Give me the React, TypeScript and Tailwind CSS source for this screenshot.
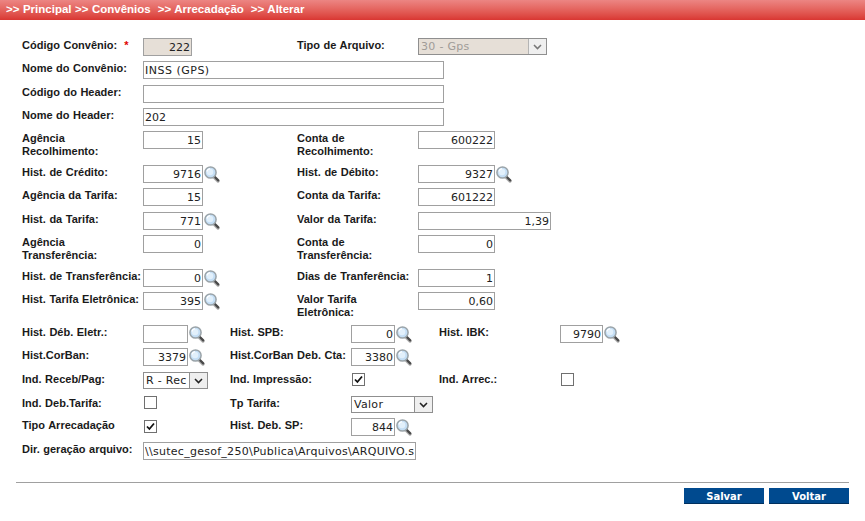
import React from "react";

const Label = ({ children, w }: { children: React.ReactNode; w: string }) => (
  <div className={`${w} shrink-0 pt-[1px] pr-[2px] text-[11px] leading-[13px] font-bold [word-spacing:0.5px] text-[#1a1a1a]`}>{children}</div>
);

const Input = ({ w, value = "", right = true, disabled = false, track = "" }: { w: string; value?: string; right?: boolean; disabled?: boolean; track?: string }) => (
  <input
    readOnly
    value={value}
    className={`${w} ${track} h-[18px] shrink-0 border border-[#a0a0a0] px-[1px] font-['DejaVu_Sans',sans-serif] text-[11px] text-[#222] outline-none ${right ? "text-right" : "text-left"} ${disabled ? "bg-[#e6dfd7]" : "bg-white"}`}
  />
);

const Lens = () => (
  <svg width="18" height="18" viewBox="0 0 18 18" className="shrink-0">
    <path d="M10.5 11.5 L15 16" stroke="#b0b0b0" strokeWidth="3.4" strokeLinecap="round" />
    <path d="M10.8 11 L15.2 15.4" stroke="#4a4a4a" strokeWidth="2.2" strokeLinecap="round" />
    <circle cx="7.5" cy="7.5" r="5.6" fill="#c4def5" stroke="#9aa3a8" strokeWidth="1.5" />
    <circle cx="7" cy="7" r="3.3" fill="#e2f0fb" />
    <path d="M3.8 6.5 A3.8 3.8 0 0 1 7 3.6" stroke="#ffffff" strokeWidth="1.1" fill="none" />
  </svg>
);

const Arrow = ({ disabled = false }: { disabled?: boolean }) => (
  <div className={`flex h-full w-[18px] shrink-0 items-center justify-center border-l bg-[#efefef] ${disabled ? "border-[#b4b4b4]" : "border-[#8f8f8f]"}`}>
    <svg width="9" height="6" viewBox="0 0 9 6">
      <path d="M1 1 L4.5 4.6 L8 1" stroke={disabled ? "#777" : "#222"} strokeWidth="1.5" fill="none" />
    </svg>
  </div>
);

const Select = ({ w, value, disabled = false }: { w: string; value: string; disabled?: boolean }) => (
  <div className={`${w} flex h-[17px] shrink-0 border border-[#8f8f8f] font-['DejaVu_Sans',sans-serif] text-[11px] leading-[16px] ${disabled ? "bg-[#e6dfd7] text-[#a09c98]" : "bg-white text-[#222]"}`}>
    <div className="min-w-0 flex-1 overflow-hidden pl-[2px] tracking-[0.3px] whitespace-nowrap">{value}</div>
    <Arrow disabled={disabled} />
  </div>
);

const Check = ({ checked = false }: { checked?: boolean }) => (
  <div className="ml-[1px] flex h-[13px] w-[13px] shrink-0 items-center justify-center border border-[#707070] bg-white">
    {checked && (
      <svg width="9" height="9" viewBox="0 0 9 9">
        <path d="M1 4.5 L3.4 7 L8 1.5" stroke="#111" strokeWidth="1.8" fill="none" />
      </svg>
    )}
  </div>
);

const Row = ({ h, children }: { h: string; children: React.ReactNode }) => <div className={`${h} flex items-start`}>{children}</div>;

const Cell = ({ w, children }: { w: string; children: React.ReactNode }) => <div className={`${w} flex shrink-0 items-start`}>{children}</div>;

const Pair = ({ a, av, b, bv, aw = "w-[60px]", bw = "w-[77px]", al = false, bl = false }: { a: React.ReactNode; av: string; b: React.ReactNode; bv: string; aw?: string; bw?: string; al?: boolean; bl?: boolean }) => (
  <>
    <Label w="w-[121px]">{a}</Label>
    <Cell w="w-[154px]">
      <Input w={aw} value={av} />
      {al && <Lens />}
    </Cell>
    <Label w="w-[121px]">{b}</Label>
    <Cell w="w-[200px]">
      <Input w={bw} value={bv} />
      {bl && <Lens />}
    </Cell>
  </>
);

export default function App() {
  return (
    <div className="h-[521px] w-[865px] overflow-hidden bg-white font-['Liberation_Sans',Arial,sans-serif]">
      <div className="flex h-[20px] items-center whitespace-pre bg-gradient-to-b from-[#ec8583] to-[#d93632] pl-[6px] text-[11.5px] font-bold [word-spacing:0.3px] text-white">
        {">> Principal >> Convênios  >> Arrecadação  >> Alterar"}
      </div>
      <div className="pt-[18px] pl-[22px]">
        <Row h="h-[23px]">
          <Label w="w-[121px]">
            Código Convênio: &nbsp;<span className="text-[#e00000]">*</span>
          </Label>
          <Cell w="w-[154px]">
            <Input w="w-[49px]" value="222" disabled />
          </Cell>
          <Label w="w-[121px]">Tipo de Arquivo:</Label>
          <Select w="w-[129px]" value="30 - Gps" disabled />
        </Row>
        <Row h="h-[24px]">
          <Label w="w-[121px]">Nome do Convênio:</Label>
          <Input w="w-[301px]" value="INSS (GPS)" right={false} track="tracking-[0.5px]" />
        </Row>
        <Row h="h-[23px]">
          <Label w="w-[121px]">Código do Header:</Label>
          <Input w="w-[301px]" right={false} />
        </Row>
        <Row h="h-[23px]">
          <Label w="w-[121px]">Nome do Header:</Label>
          <Input w="w-[301px]" value="202" right={false} />
        </Row>
        <Row h="h-[34px]">
          <Pair a={<>Agência<br />Recolhimento:</>} av="15" b={<>Conta de<br />Recolhimento:</>} bv="600222" />
        </Row>
        <Row h="h-[23px]">
          <Pair a="Hist. de Crédito:" av="9716" al b="Hist. de Débito:" bv="9327" bl />
        </Row>
        <Row h="h-[24px]">
          <Pair a="Agência da Tarifa:" av="15" b="Conta da Tarifa:" bv="601222" />
        </Row>
        <Row h="h-[23px]">
          <Pair a="Hist. da Tarifa:" av="771" al b="Valor da Tarifa:" bv="1,39" bw="w-[133px]" />
        </Row>
        <Row h="h-[34px]">
          <Pair a={<>Agência<br />Transferência:</>} av="0" b={<>Conta de<br />Transferência:</>} bv="0" />
        </Row>
        <Row h="h-[23px]">
          <Pair a={<span className="whitespace-nowrap">Hist. de Transferência:</span>} av="0" al b="Dias de Tranferência:" bv="1" />
        </Row>
        <Row h="h-[33px]">
          <Pair a={<span className="whitespace-nowrap">Hist. Tarifa Eletrônica:</span>} av="395" al b={<>Valor Tarifa<br />Eletrônica:</>} bv="0,60" />
        </Row>

        <Row h="h-[23px]">
          <Label w="w-[121px]">Hist. Déb. Eletr.:</Label>
          <Cell w="w-[87px]"><Input w="w-[45px]" /><Lens /></Cell>
          <Label w="w-[121px]">Hist. SPB:</Label>
          <Cell w="w-[88px]"><Input w="w-[44px]" value="0" /><Lens /></Cell>
          <Label w="w-[121px]">Hist. IBK:</Label>
          <Input w="w-[43px]" value="9790" /><Lens />
        </Row>
        <Row h="h-[24px]">
          <Label w="w-[121px]">Hist.CorBan:</Label>
          <Cell w="w-[87px]"><Input w="w-[45px]" value="3379" /><Lens /></Cell>
          <Label w="w-[121px]"><span className="whitespace-nowrap">Hist.CorBan Deb. Cta:</span></Label>
          <Cell w="w-[88px]"><Input w="w-[44px]" value="3380" /><Lens /></Cell>
        </Row>
        <Row h="h-[24px]">
          <Label w="w-[121px]">Ind. Receb/Pag:</Label>
          <Cell w="w-[87px]"><Select w="w-[65px]" value="R - Rec" /></Cell>
          <Label w="w-[121px]">Ind. Impressão:</Label>
          <Cell w="w-[88px]"><div className="pt-[1px]"><Check checked /></div></Cell>
          <Label w="w-[121px]">Ind. Arrec.:</Label>
          <div className="pt-[1px]"><Check /></div>
        </Row>
        <Row h="h-[22px]">
          <Label w="w-[121px]">Ind. Deb.Tarifa:</Label>
          <Cell w="w-[87px]"><Check /></Cell>
          <Label w="w-[121px]">Tp Tarifa:</Label>
          <Select w="w-[82px]" value="Valor" />
        </Row>
        <Row h="h-[24px]">
          <Label w="w-[121px]">Tipo Arrecadação</Label>
          <Cell w="w-[87px]"><div className="pt-[2px]"><Check checked /></div></Cell>
          <Label w="w-[121px]">Hist. Deb. SP:</Label>
          <Input w="w-[44px]" value="844" /><Lens />
        </Row>
        <Row h="h-[40px]">
          <Label w="w-[121px]"><span className="whitespace-nowrap">Dir. geração arquivo:</span></Label>
          <Input w="w-[273px]" value="\\sutec_gesof_250\Publica\Arquivos\ARQUIVO.sai" right={false} track="tracking-[0.27px]" />
        </Row>
      </div>
      <div className="ml-[16px] w-[833px] border-t border-[#a0a0a0]" />
      <div className="flex w-[849px] justify-end gap-[5px] pt-[5px]">
        {["Salvar", "Voltar"].map((t) => (
          <div key={t} className="flex h-[16px] w-[80px] items-center justify-center bg-[#004a8f] font-['DejaVu_Sans',sans-serif] text-[10px] font-bold text-white shadow-[inset_0_-1px_0_#00305e]">
            {t}
          </div>
        ))}
      </div>
    </div>
  );
}
